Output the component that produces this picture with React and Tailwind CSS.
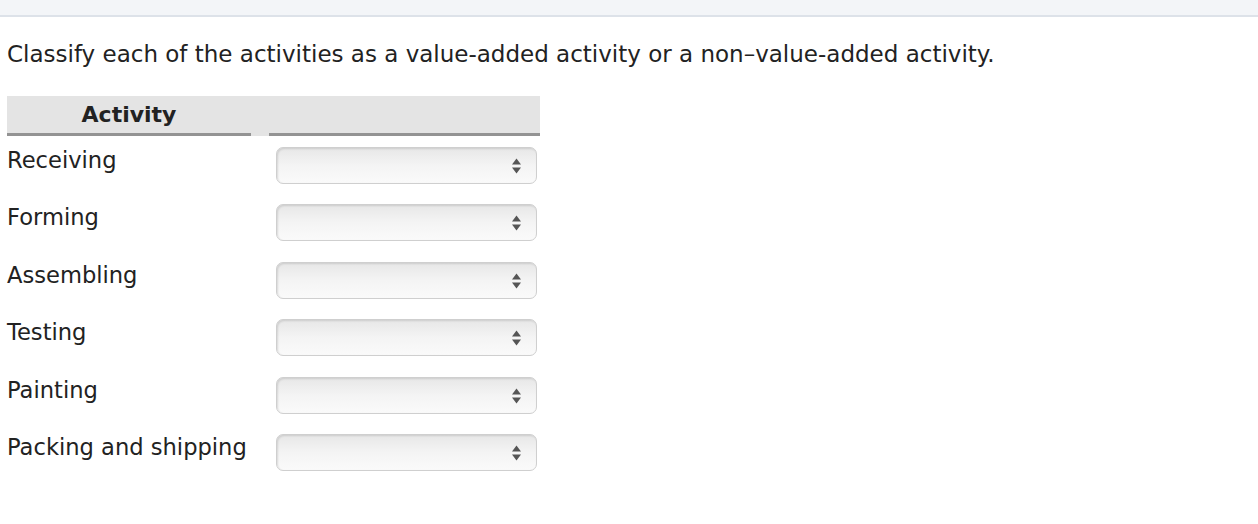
import React from 'react';

const activities = [
  'Receiving',
  'Forming',
  'Assembling',
  'Testing',
  'Painting',
  'Packing and shipping',
];

const FakeSelect = () => (
  <div className="relative w-[261px] h-[37px] rounded-[7px] border border-[#cfcfcf] bg-gradient-to-b from-[#e7e7e7] via-[#f4f4f4] to-[#fafafa] shadow-[inset_1px_1px_2px_rgba(0,0,0,0.12)]">
    <svg
      className="absolute right-[14px] top-[9px]"
      width="11"
      height="18"
      viewBox="0 0 11 18"
    >
      <path d="M5.5 1.5 L10 7.5 L1 7.5 Z" fill="#555" />
      <path d="M5.5 16.5 L10 10.5 L1 10.5 Z" fill="#555" />
    </svg>
  </div>
);

const App = () => {
  return (
    <div className="w-[1258px] h-[524px] bg-white text-[#222] font-['DejaVu_Sans',Verdana,sans-serif] overflow-hidden">
      <div className="h-[17px] bg-[#f3f5f8] border-b-2 border-[#dde2e9]" />

      <div className="pl-[7px]">
        <p className="mt-[21px] text-[23px] leading-[32px] whitespace-nowrap">
          Classify each of the activities as a value-added activity or a non–value-added activity.
        </p>

        <div className="mt-[26px] w-[533px]">
          <div className="flex h-[40px] bg-[#e4e4e4]">
            <div className="w-[244px] border-b-[3px] border-[#939393] flex items-center justify-center text-[22px] font-bold">
              Activity
            </div>
            <div className="w-[18px]" />
            <div className="flex-1 border-b-[3px] border-[#939393]" />
          </div>

          {activities.map((a) => (
            <div key={a} className="flex h-[57.4px] items-start">
              <div className="w-[268px] pt-[8px] text-[22.6px] leading-[32px] whitespace-nowrap">
                {a}
              </div>
              <div className="mt-[11px] ml-[1px]">
                <FakeSelect />
              </div>
            </div>
          ))}
        </div>
      </div>
    </div>
  );
};

export default App;
